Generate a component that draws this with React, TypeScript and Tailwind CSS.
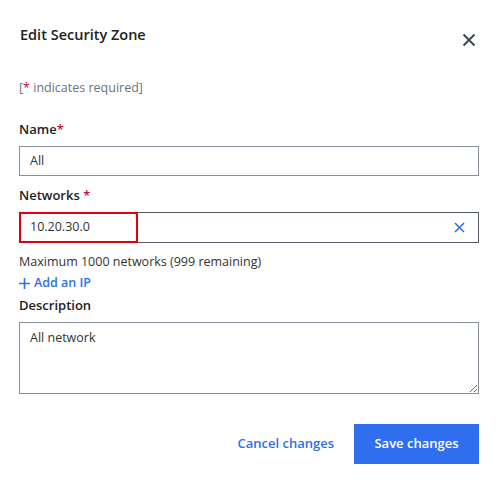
import React from 'react';

const App: React.FC = () => {
  return (
    <div
      className="w-[498px] h-[483px] bg-white text-[#1f2328] relative"
      style={{ fontFamily: '"Open Sans", "Liberation Sans", sans-serif' }}
    >
      {/* Header */}
      <div className="flex items-start justify-between pl-[20px] pr-[22px] pt-[25px]">
        <h1 className="text-[14.5px] font-semibold leading-[20px] text-[#222]">Edit Security Zone</h1>
        <button className="mt-[8px] text-[#3f4657]">
          <svg width="14" height="14" viewBox="0 0 14 14" fill="none" stroke="currentColor" strokeWidth="2">
            <path d="M1.5 1.5l11 11M12.5 1.5l-11 11" />
          </svg>
        </button>
      </div>

      <div className="px-[19px]">
        <p className="mt-[33px] text-[12.5px] leading-[16px] text-[#6b7280]">
          [<span className="text-[#c8102e]">*</span> indicates required]
        </p>

        {/* Name */}
        <label className="block mt-[24px] text-[13px] font-semibold leading-[18px] text-[#222]">
          Name<span className="text-[#c8102e]">*</span>
        </label>
        <div className="mt-[8px] h-[30px] border border-[#8a8f9c] flex items-center px-[10px] text-[12.5px] text-[#333]">
          All
        </div>

        {/* Networks */}
        <label className="block mt-[10px] text-[13px] font-semibold leading-[18px] text-[#222]">
          Networks <span className="text-[#c8102e]">*</span>
        </label>
        <div className="mt-[8px] h-[31px] border border-[#555b66] flex items-center justify-between relative">
          <div className="absolute -left-px -top-px w-[119px] h-[31px] border-2 border-[#e0000f]" />
          <span className="pl-[10px] text-[12.5px] text-[#333]">10.20.30.0</span>
          <button className="mr-[13px] text-[#2f6fe4]">
            <svg width="11" height="11" viewBox="0 0 11 11" fill="none" stroke="currentColor" strokeWidth="1.6">
              <path d="M1 1l9 9M10 1l-9 9" />
            </svg>
          </button>
        </div>

        <p className="mt-[11px] text-[12.5px] leading-[16px] text-[#333]">
          Maximum 1000 networks (999 remaining)
        </p>
        <button className="mt-[5px] flex items-center gap-[4px] text-[12.5px] font-semibold leading-[16px] text-[#2f6fe4]">
          <svg width="11" height="11" viewBox="0 0 11 11" fill="none" stroke="currentColor" strokeWidth="1.6">
            <path d="M5.5 0v11M0 5.5h11" />
          </svg>
          Add an IP
        </button>

        <label className="block mt-[5px] text-[13px] font-semibold leading-[18px] text-[#222]">
          Description
        </label>
        <textarea
          className="mt-[8px] block w-full h-[72px] border border-[#8a8f9c] px-[10px] py-[6px] text-[12.5px] text-[#333] outline-none resize-y"
          defaultValue="All network"
        />

        {/* Footer */}
        <div className="mt-[30px] flex items-center justify-end gap-[20px]">
          <button className="text-[13px] font-semibold text-[#2f6fe4]">Cancel changes</button>
          <button className="w-[125px] h-[40px] bg-[#2f6fef] text-white text-[13px] font-semibold">
            Save changes
          </button>
        </div>
      </div>
    </div>
  );
};

export default App;
